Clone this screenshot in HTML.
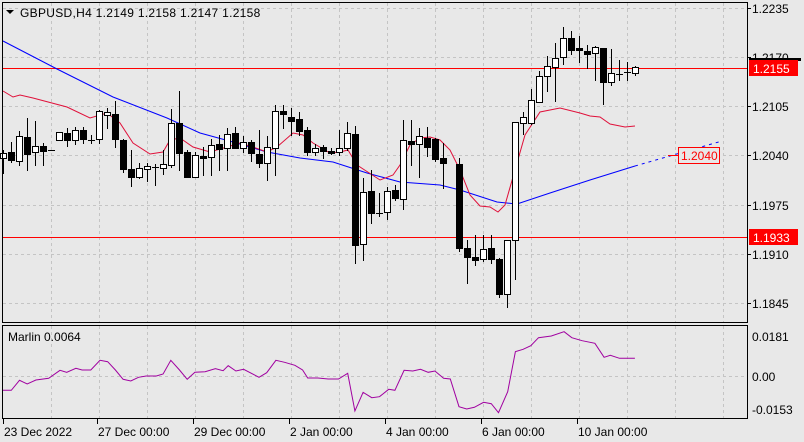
<!DOCTYPE html>
<html><head><meta charset="utf-8"><style>
html,body{margin:0;padding:0;background:#e8e8e8;width:804px;height:442px;overflow:hidden}
svg{display:block}
text{font-family:"Liberation Sans",sans-serif;font-size:12px;fill:#000}
</style></head><body>
<svg id="s" width="804" height="442" xmlns="http://www.w3.org/2000/svg">
<rect width="804" height="442" fill="#e8e8e8"/>
<g id="grid" stroke="#c4c4c4" stroke-dasharray="3,3" stroke-width="1"></g>
<line x1="2" y1="68.5" x2="747" y2="68.5" stroke="#ff0000"/>
<line x1="2" y1="237.5" x2="747" y2="237.5" stroke="#ff0000"/>
<g id="lines"></g>
<g id="candles"></g>
<line x1="668" y1="155.5" x2="679" y2="155.5" stroke="#ff0000"/>
<rect x="678.5" y="147.5" width="41" height="16" fill="#e8e8e8" stroke="#ff0000"/>
<text x="681" y="160" style="fill:#ff0000">1.2040</text>
<rect x="2.5" y="2.5" width="745" height="320" fill="none" stroke="#000"/>
<rect x="2.5" y="325.5" width="745" height="93" fill="none" stroke="#000"/>
<polygon points="6,10 14,10 10,14" fill="#000"/>
<text x="20" y="17" style="letter-spacing:0.3px">GBPUSD,H4  1.2149 1.2158 1.2147 1.2158</text>
<text x="8" y="341">Marlin 0.0064</text>
<g id="scale"></g>
<rect x="749" y="58" width="52" height="3" fill="#000"/>
<rect x="749" y="60" width="49" height="16" fill="#ff0000"/>
<text x="753" y="73" style="fill:#fff">1.2155</text>
<rect x="749" y="229" width="49" height="16" fill="#ff0000"/>
<text x="753" y="242" style="fill:#fff">1.1933</text>
<text x="752" y="341">0.0181</text>
<text x="752" y="381">0.00</text>
<text x="752" y="414">-0.0153</text>
<g id="time"></g>
</svg>
<script>
var NS="http://www.w3.org/2000/svg";
function el(p,t,a,txt){var e=document.createElementNS(NS,t);for(var k in a)e.setAttribute(k,a[k]);if(txt)e.textContent=txt;document.getElementById(p).appendChild(e);return e;}
var gx=[51,99,147,195,243,291,339,387,435,483,531,579,627,675,723];
gx.forEach(function(x){el('grid','line',{x1:x+.5,y1:3,x2:x+.5,y2:322});el('grid','line',{x1:x+.5,y1:326,x2:x+.5,y2:418});});
var gy=[8,57,106,155,205,254,303];
gy.forEach(function(y){el('grid','line',{x1:3,y1:y+.5,x2:747,y2:y+.5});});
el('grid','line',{x1:3,y1:376.5,x2:747,y2:376.5});
var sl=[["1.2235",8],["1.2170",57],["1.2105",106],["1.2040",155],["1.1975",205],["1.1910",254],["1.1845",303]];
sl.forEach(function(s){el('scale','line',{x1:747,y1:s[1]+.5,x2:751,y2:s[1]+.5,stroke:'#000'});if(s[0]!="1.2170")el('scale','text',{x:752,y:s[1]+5},s[0]);});
el('scale','text',{x:752,y:62},"1.2170");
var tl=[["23 Dec 2022",3],["27 Dec 00:00",97],["29 Dec 00:00",193],["2 Jan 00:00",289],["4 Jan 00:00",385],["6 Jan 00:00",481],["10 Jan 00:00",577]];
tl.forEach(function(t){el('time','line',{x1:t[1]+.5,y1:419,x2:t[1]+.5,y2:424,stroke:'#000'});el('time','text',{x:t[1]+1,y:436},t[0]);});
var C=[[1,153,158,150,173],[0,152,160,142,162],[1,136,161,131,165],[0,137,154,118,170],[1,146,152,121,165],[0,146,151,143,165],[2,150,150,150,150],[1,132,140,132,140],[0,133,140,128,146],[1,130,140,127,144],[0,130,139,127,143],[2,140,140,135,143],[1,111,139,110,143],[1,112,115,108,128],[0,114,139,101,147],[0,140,169,139,172],[0,169,177,150,186],[1,168,177,163,178],[1,166,169,163,181],[2,167,167,164,185],[1,164,168,150,174],[1,123,165,109,167],[0,123,153,91,170],[0,152,177,150,177],[1,155,177,152,177],[0,156,158,147,175],[1,145,157,139,175],[0,144,149,135,170],[1,134,148,128,170],[0,133,148,127,148],[1,142,148,136,152],[0,142,153,140,161],[0,154,163,130,167],[1,147,163,136,180],[1,111,148,105,175],[0,111,114,105,128],[0,117,121,108,135],[0,119,131,112,135],[0,130,152,127,155],[1,148,152,144,155],[0,147,151,145,158],[0,151,153,148,154],[1,148,152,130,155],[1,133,148,122,150],[0,134,245,126,263],[1,192,244,178,260],[0,191,213,170,223],[2,213,213,193,216],[1,191,212,187,219],[0,190,198,185,200],[1,140,199,120,209],[0,141,144,120,165],[1,136,144,128,177],[0,138,147,127,156],[0,139,159,138,161],[0,158,163,143,188],[0,164,248,158,251],[0,248,257,240,283],[0,257,260,235,265],[1,249,259,235,261],[0,248,259,235,263],[0,259,294,258,297],[1,240,294,240,307],[1,122,240,122,279],[1,117,123,112,134],[1,100,123,89,124],[1,76,102,71,102],[1,66,76,56,91],[1,58,67,43,101],[1,38,57,27,64],[0,38,50,31,54],[0,48,50,36,62],[0,51,54,45,68],[1,47,53,46,80],[0,48,82,48,104],[1,73,82,49,85],[2,74,74,60,80],[2,72,72,62,80],[1,67,73,66,75]];
C.forEach(function(c,i){
  var x=3+8*i;
  if(i>=56) x=459+8*(i-56);
  var cx=x+.5;
  el('candles','line',{x1:cx,y1:c[3],x2:cx,y2:c[4]+1,stroke:'#000'});
  if(c[0]==2){el('candles','line',{x1:x-3,y1:c[1]+.5,x2:x+4,y2:c[1]+.5,stroke:'#000'});}
  else{var h=Math.max(c[2]-c[1],1);el('candles','rect',{x:x-2.5,y:c[1]+.5,width:6,height:h,fill:c[0]?'#fff':'#000',stroke:'#000'});}
});
function pl(pts,col,extra){var a={points:pts.map(function(p){return p.join(',')}).join(' '),fill:'none',stroke:col,'stroke-width':1};for(var k in extra)a[k]=extra[k];el('lines','polyline',a);}
pl([[3,41],[57,69],[113,97],[167,118],[200,133],[233,142],[267,152],[300,158],[333,162],[367,173],[400,182],[440,185],[460,190],[497,202],[517,204],[550,193],[590,180],[635,166]],'#0000ff');
pl([[635,166],[722,141]],'#0000ff',{'stroke-dasharray':'3,4'});
pl([[3,91],[13,97],[20,95],[33,98],[67,107],[90,118],[107,113],[120,123],[133,143],[150,154],[163,152],[170,140],[180,138],[193,147],[210,152],[227,147],[240,143],[253,147],[267,152],[277,147],[293,133],[303,135],[313,143],[330,153],[340,152],[348,150],[357,165],[380,180],[393,175],[400,165],[410,145],[420,138],[430,137],[440,140],[450,150],[460,170],[470,195],[480,206],[490,207],[498,212],[505,205],[515,170],[525,135],[540,112],[560,108],[580,113],[590,116],[600,117],[610,124],[625,127],[635,126]],'#e0103a');
var M=[[5,241],[22,241],[38,211],[53,222],[70,210],[95,205],[117,181],[130,187],[148,175],[160,180],[177,180],[195,151],[210,155],[225,180],[240,208],[255,213],[270,202],[285,198],[305,198],[318,192],[333,151],[350,180],[365,208],[380,187],[400,185],[420,176],[435,182],[445,167],[460,183],[475,178],[505,202],[520,188],[538,151],[555,157],[575,166],[590,180],[600,204],[620,204],[640,207],[660,207],[678,190],[692,303],[708,247],[725,263],[740,260],[758,238],[770,241],[788,181],[805,183],[820,178],[835,187],[848,183],[865,205],[878,207],[895,290],[910,297],[925,292],[943,277],[958,281],[972,308],[990,245],[1005,125],[1020,118],[1035,107],[1050,83],[1075,78],[1100,65],[1115,83],[1135,92],[1160,100],[1178,142],[1190,136],[1208,145],[1238,145]];
pl(M.map(function(p){return [(p[0]/1.95).toFixed(1),(310+p[1]/3).toFixed(1)]}),'#a000a0');
</script>
</body></html>
